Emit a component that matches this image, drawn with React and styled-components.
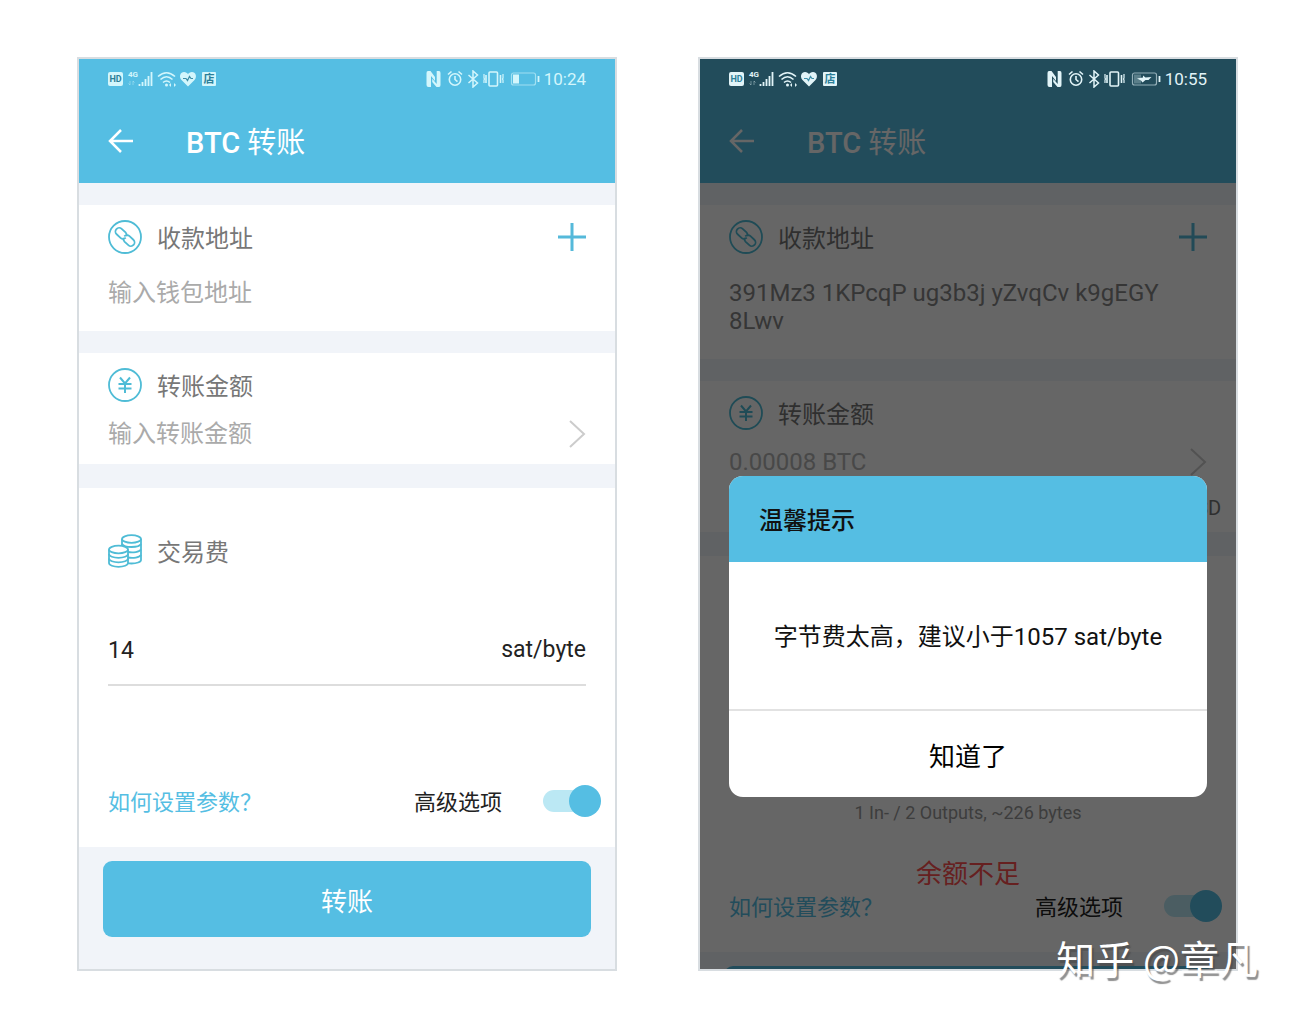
import React, { useId, useState } from "react";
import styled, { createGlobalStyle } from "styled-components";

const App = () => {
  return (
    <>
      <GlobalStyle />
      <Page>
        <TransferScreen time="10:24" fee="14" />
        <TransferScreen
          time="10:55"
          address="391Mz3 1KPcqP ug3b3j yZvqCv k9gEGY 8Lwv"
          amount="0.00008 BTC"
          currency="USD"
          txInfo="1 In- / 2 Outputs, ~226 bytes"
          error="余额不足"
          charging
          warning
        />
        <Watermark>知乎 @章凡</Watermark>
      </Page>
    </>
  );
};

export default App;

const TransferScreen = (props) => {
  const [advanced, setAdvanced] = useState(true);
  const id = useId();

  return (
    <Phone>
      <Header>
        <StatusBar $dim={!props.warning}>
          <StatusLeft />
          <StatusRight charging={props.charging} />
          <Clock>{props.time}</Clock>
        </StatusBar>
        <TitleBar>
          <BackBtn aria-label="返回">
            <svg width="26" height="26" viewBox="0 0 26 26">
              <path d="M25 13H2M13 2L2 13l11 11" />
            </svg>
          </BackBtn>
          <Title>
            <b>BTC</b> 转账
          </Title>
        </TitleBar>
      </Header>

      <Card>
        <CardHead>
          <LinkIcon />
          <Label htmlFor={id + "address"}>收款地址</Label>
          <AddBtn aria-label="添加">
            <svg width="28" height="28" viewBox="0 0 28 28">
              <path d="M14 0v28M0 14h28" />
            </svg>
          </AddBtn>
        </CardHead>
        <Address
          id={id + "address"}
          rows={props.address ? 2 : 1}
          placeholder="输入钱包地址"
          defaultValue={props.address}
        />
      </Card>

      <Card $tight>
        <CardHead>
          <YuanIcon />
          <Label htmlFor={id + "amount"}>转账金额</Label>
        </CardHead>
        <AmountRow>
          <Amount
            id={id + "amount"}
            placeholder="输入转账金额"
            defaultValue={props.amount}
          />
          <svg width="18" height="28" viewBox="0 0 18 28">
            <path d="M2 1l14 13L2 27" />
          </svg>
        </AmountRow>
        {props.currency && <Currency>{props.currency}</Currency>}
      </Card>

      <FeeCard>
        <CardHead>
          <CoinsIcon />
          <Label htmlFor={id + "fee"}>交易费</Label>
        </CardHead>
        <FeeRow>
          <Fee id={id + "fee"} defaultValue={props.fee} />
          <span>sat/byte</span>
        </FeeRow>
        <Notes>
          {props.txInfo && <TxInfo>{props.txInfo}</TxInfo>}
          {props.error && <ErrorText>{props.error}</ErrorText>}
        </Notes>
        <Options>
          <HelpLink href="#help">如何设置参数？</HelpLink>
          <ToggleLabel htmlFor={id + "advanced"}>高级选项</ToggleLabel>
          <Toggle
            id={id + "advanced"}
            type="checkbox"
            checked={advanced}
            onChange={(e) => setAdvanced(e.target.checked)}
          />
        </Options>
      </FeeCard>

      <Footer>
        <SubmitBtn>转账</SubmitBtn>
      </Footer>

      {props.warning && (
        <Overlay>
          <Dialog role="dialog" aria-labelledby={id + "tip"}>
            <DialogTitle id={id + "tip"}>温馨提示</DialogTitle>
            <DialogText>字节费太高，建议小于1057 sat/byte</DialogText>
            <DialogBtn>知道了</DialogBtn>
          </Dialog>
        </Overlay>
      )}
    </Phone>
  );
};

const StatusLeft = () => (
  <svg width="110" height="18" viewBox="0 0 110 18">
    {/* HD */}
    <rect x="0" y="2" width="15" height="14" rx="2" fill="currentColor" />
    <IconText x="7.5" y="12" $size={9}>
      HD
    </IconText>
    {/* 4G signal */}
    <IconText x="25" y="7" $size={8} $light>
      4G
    </IconText>
    <path
      d="M22 11v4M20.500 13.500L22 15M25 15v-4M26.500 12.500L25 11"
      stroke="currentColor"
      strokeWidth="0.8"
      opacity="0.5"
      fill="none"
    />
    <path
      d="M31.500 16v-2M34.500 16v-4M37.500 16v-7M40.500 16V6M43.500 16V2"
      stroke="currentColor"
      strokeWidth="1.8"
    />
    {/* wifi */}
    <path
      d="M50 6.500q8.500-7.500 17 0M52.500 9.500q6-5.500 12 0M55 12.500q3.500-3 7 0"
      stroke="currentColor"
      strokeWidth="1.6"
      fill="none"
    />
    <circle cx="58.500" cy="15" r="1.500" fill="currentColor" />
    <path d="M61 15l2-2v4zM68 15l-2-2v4z" fill="currentColor" />
    {/* heart */}
    <path
      d="M80 16.500L73.500 10C70.500 6.500 72.500 2 76 2c2 0 3.200 1 4 2.200C80.800 3 82 2 84 2c3.500 0 5.500 4.500 2.500 8z"
      fill="currentColor"
    />
    <path
      d="M75 8.500h3l1.500 2 2-4 1.500 2h2"
      stroke="#3f8fa8"
      strokeWidth="1.200"
      fill="none"
    />
    {/* shop */}
    <rect x="94" y="2" width="14" height="14" rx="1" fill="currentColor" />
    <IconText x="101" y="13" $size={11}>
      店
    </IconText>
  </svg>
);

const StatusRight = ({ charging }) => (
  <svg width="114" height="18" viewBox="0 0 114 18">
    {/* nfc */}
    <path
      d="M2 1h2.500L9 7v4L5 6v11H2.500Q.5 17 .5 15V3Q.5 1 2 1zM13 17h-2.500L6.200 12V8.800L10.700 14V1H13q1.500 0 1.500 2v12q0 2-1.500 2z"
      fill="currentColor"
    />
    {/* alarm */}
    <g stroke="currentColor" strokeWidth="1.6" fill="none">
      <circle cx="29" cy="9.500" r="5.700" />
      <path d="M29 6v3.500l2.500 2.200M22 4.500L25.500 1.500M36 4.500L32.500 1.500" />
    </g>
    {/* bluetooth */}
    <path
      d="M42.500 5l9 8-4.500 4V1l4.500 4-9 8"
      stroke="currentColor"
      strokeWidth="1.5"
      fill="none"
    />
    {/* vibrate */}
    <g stroke="currentColor" strokeWidth="1.6" fill="none">
      <rect x="63" y="2" width="8.500" height="14" rx="1" />
      <path d="M60 5v8M74.500 5v8" />
      <path d="M58 4v4l0.500 1-0.500 1v3M77 4v4l-0.500 1 0.500 1v3" strokeWidth="1.2" />
    </g>
    {/* battery */}
    <rect
      x="85.500"
      y="3"
      width="24"
      height="12"
      rx="2"
      stroke="currentColor"
      strokeWidth="1.200"
      fill="none"
      opacity="0.6"
    />
    <path d="M112.500 6v6" stroke="currentColor" strokeWidth="1.8" />
    {charging ? (
      <>
        <rect x="87" y="4.500" width="7" height="9" fill="currentColor" opacity="0.3" />
        <path
          d="M90 8.500l6-1v-2l2.500 2 6-.5-3 3h-3l-3 2.500-1.500-2z"
          fill="currentColor"
        />
      </>
    ) : (
      <rect x="87" y="4.500" width="6" height="9" fill="currentColor" />
    )}
  </svg>
);

const LinkIcon = () => (
  <RoundIcon viewBox="0 0 34 34">
    <circle cx="17" cy="17" r="16" />
    <g transform="rotate(43 17 17)">
      <path d="M17.500 15.500A3.700 3.700 0 0 0 14.300 13.300H9a3.700 3.700 0 0 0 0 7.400h5.300A3.700 3.700 0 0 0 18 17" />
      <path d="M16.500 18.500A3.700 3.700 0 0 0 19.700 20.700H25a3.700 3.700 0 0 0 0-7.400h-5.300A3.700 3.700 0 0 0 16 17" />
    </g>
  </RoundIcon>
);

const YuanIcon = () => (
  <RoundIcon viewBox="0 0 34 34">
    <circle cx="17" cy="17" r="16" />
    <path
      d="M12 9.500l5 6 5-6M17 15.500V25M10.500 16h13M10.500 20.500h13"
      strokeWidth="2"
    />
  </RoundIcon>
);

const CoinsIcon = () => (
  <RoundIcon viewBox="0 0 34 34">
    <ellipse cx="23.500" cy="5" rx="9.500" ry="3.800" />
    <path d="M14 5v7M33 5v21c0 2-4.500 3.500-9.500 3.500-1.500 0-2.500 0-3.500-.3" />
    <path d="M14 10c1 1.800 5 3 9.500 3S32 12 33 10M20 18c5 1 11.500 0 13-2.500M20 23.500c5 1 11.500 0 13-2.500" />
    <ellipse cx="10.500" cy="15.500" rx="9.500" ry="3.800" />
    <path d="M1 15.500V29c0 2.200 4.500 3.800 9.500 3.800S20 31.200 20 29V15.500" />
    <path d="M1 20c0 2.200 4.500 3.800 9.500 3.800S20 22.200 20 20M1 24.500c0 2.200 4.500 3.800 9.500 3.800S20 26.700 20 24.500" />
  </RoundIcon>
);

const GlobalStyle = createGlobalStyle`
  * {
    box-sizing: border-box;
  }

  body {
    margin: 0;
    background: white;
  }

  body, button, input, textarea {
    font-family: Roboto, "Noto Sans CJK SC", sans-serif;
  }

  button, input, textarea {
    border: none;
    padding: 0;
    background: none;
    border-radius: 0;
    outline: none;
  }

  button {
    cursor: pointer;
  }
`;

const Page = styled.main`
  position: relative;
  display: grid;
  grid-template-columns: 1fr 1fr;
  grid-template-rows: minmax(0, 1fr);
  gap: 81px;
  height: 100vh;
  padding: 57px 52px 41px 77px;
`;

const Phone = styled.section`
  position: relative;
  display: flex;
  flex-direction: column;
  overflow: hidden;
  border: 2px solid #d8dde1;
  background: #f1f4f9;
  color: #222;

  > * {
    flex-shrink: 0;
  }
`;

const Header = styled.header`
  background: #55bee3;
  margin-bottom: 22px;
`;

const StatusBar = styled.div`
  position: relative;
  z-index: 2;
  display: flex;
  align-items: center;
  height: 40px;
  padding: 0 29px;
  color: ${(props) => (props.$dim ? "#d3f6fc" : "#e2f4f8")};

  svg:nth-child(2) {
    margin-left: auto;
  }
`;

const IconText = styled.text`
  font-size: ${(props) => props.$size}px;
  font-weight: 700;
  text-anchor: middle;
  fill: ${(props) => (props.$light ? "currentColor" : "#2c7f99")};
`;

const Clock = styled.span`
  font-size: 17px;
  margin-left: 4px;
`;

const TitleBar = styled.div`
  display: flex;
  align-items: center;
  gap: 52px;
  height: 84px;
  padding: 0 29px;
`;

const BackBtn = styled.button`
  display: flex;

  path {
    stroke: white;
    stroke-width: 2.5;
    fill: none;
  }
`;

const Title = styled.h1`
  margin: 0;
  padding-top: 3px;
  font-size: 29px;
  line-height: 40px;
  font-weight: 400;
  color: white;

  b {
    font-weight: 500;
  }
`;

const Card = styled.div`
  display: flex;
  flex-direction: column;
  gap: ${(props) => (props.$tight ? 18 : 25)}px;
  padding: 15px 29px ${(props) => (props.$tight ? 16 : 24)}px;
  margin-bottom: ${(props) => (props.$tight ? 24 : 22)}px;
  background: white;
`;

const CardHead = styled.div`
  display: flex;
  align-items: center;
  gap: 15px;
  height: 34px;
`;

const RoundIcon = styled.svg`
  width: 34px;
  height: 34px;
  fill: none;
  stroke: #4fbcd6;
  stroke-width: 1.8;
`;

const Label = styled.label`
  padding-top: 3px;
  font-size: 24px;
  line-height: 34px;
  color: #777;
`;

const AddBtn = styled.button`
  display: flex;
  margin-left: auto;

  path {
    stroke: #55b9da;
    stroke-width: 3;
  }
`;

const Address = styled.textarea`
  width: 100%;
  resize: none;
  overflow: hidden;
  font-size: 24px;
  line-height: 28px;
  color: #888;

  &::placeholder {
    color: #aaa;
  }
`;

const AmountRow = styled.div`
  display: flex;
  align-items: center;

  path {
    stroke: #ccc;
    stroke-width: 2;
    fill: none;
  }
`;

const Amount = styled.input`
  flex: 1;
  min-width: 0;
  height: 28px;
  font-size: 24px;
  color: #b4b4b4;

  &::placeholder {
    color: #aaa;
  }
`;

const Currency = styled.div`
  margin: 0 -14px -6px 0;
  font-size: 20px;
  line-height: 28px;
  text-align: right;
  color: #777;
`;

const FeeCard = styled.div`
  padding: 46px 29px 30px;
  background: white;
`;

const FeeRow = styled.div`
  display: flex;
  align-items: center;
  margin-top: 65px;
  padding-bottom: 17px;
  border-bottom: 2px solid #ddd;
  font-size: 23px;
  line-height: 34px;
`;

const Fee = styled.input`
  flex: 1;
  min-width: 0;
  height: 34px;
  font-size: 23px;
  color: #222;
`;

const Notes = styled.div`
  display: flex;
  flex-direction: column;
  align-items: center;
  gap: 34px;
  min-height: 99px;

  &:not(:empty) {
    padding-top: 48px;
  }
`;

const TxInfo = styled.div`
  font-size: 18px;
  line-height: 22px;
  color: #999;
`;

const ErrorText = styled.div`
  font-size: 26px;
  line-height: 32px;
  color: #ff5050;
`;

const Options = styled.div`
  display: flex;
  align-items: center;
  height: 32px;
  margin-right: -15px;
  line-height: 32px;
`;

const HelpLink = styled.a`
  padding-top: 3px;
  font-size: 22px;
  color: #55bee3;
  text-decoration: none;
`;

const ToggleLabel = styled.label`
  margin: 0 41px 0 auto;
  padding-top: 3px;
  font-size: 22px;
`;

const Toggle = styled.input`
  appearance: none;
  display: grid;
  align-items: center;
  width: 58px;
  height: 32px;
  margin: 0;
  cursor: pointer;

  &::before,
  &::after {
    content: "";
    grid-area: 1 / 1;
  }

  &::before {
    width: 48px;
    height: 22px;
    border-radius: 11px;
    background: #bbe8f4;
  }

  &::after {
    width: 32px;
    height: 32px;
    border-radius: 50%;
    background: #55bee3;
  }

  &:checked::after {
    justify-self: end;
  }
`;

const Footer = styled.footer`
  padding: 14px 24px 32px;
`;

const SubmitBtn = styled.button`
  width: 100%;
  height: 76px;
  border-radius: 9px;
  background: #55bee3;
  color: white;
  font-size: 26px;
`;

const Overlay = styled.div`
  position: absolute;
  inset: 0;
  z-index: 1;
  padding: 417px 29px 0;
  background: rgba(0, 0, 0, 0.6);
`;

const Dialog = styled.div`
  overflow: hidden;
  border-radius: 14px;
  background: white;
  color: #111;
  line-height: 36px;
`;

const DialogTitle = styled.h2`
  margin: 0;
  padding: 27px 30px 23px;
  background: #55bee3;
  font-size: 24px;
  font-weight: 500;
`;

const DialogText = styled.p`
  margin: 0;
  padding: 57px 20px 54px;
  font-size: 24px;
  text-align: center;
`;

const DialogBtn = styled.button`
  width: 100%;
  height: 88px;
  border-top: 2px solid #e2e2e2;
  font-size: 26px;
`;

const Watermark = styled.div`
  position: absolute;
  right: 32px;
  bottom: 27px;
  z-index: 3;
  font-family: "Noto Sans CJK SC", sans-serif;
  font-size: 39px;
  line-height: 56px;
  color: white;
  text-shadow: 2px 3px 1px rgba(70, 70, 70, 0.6);
`;
